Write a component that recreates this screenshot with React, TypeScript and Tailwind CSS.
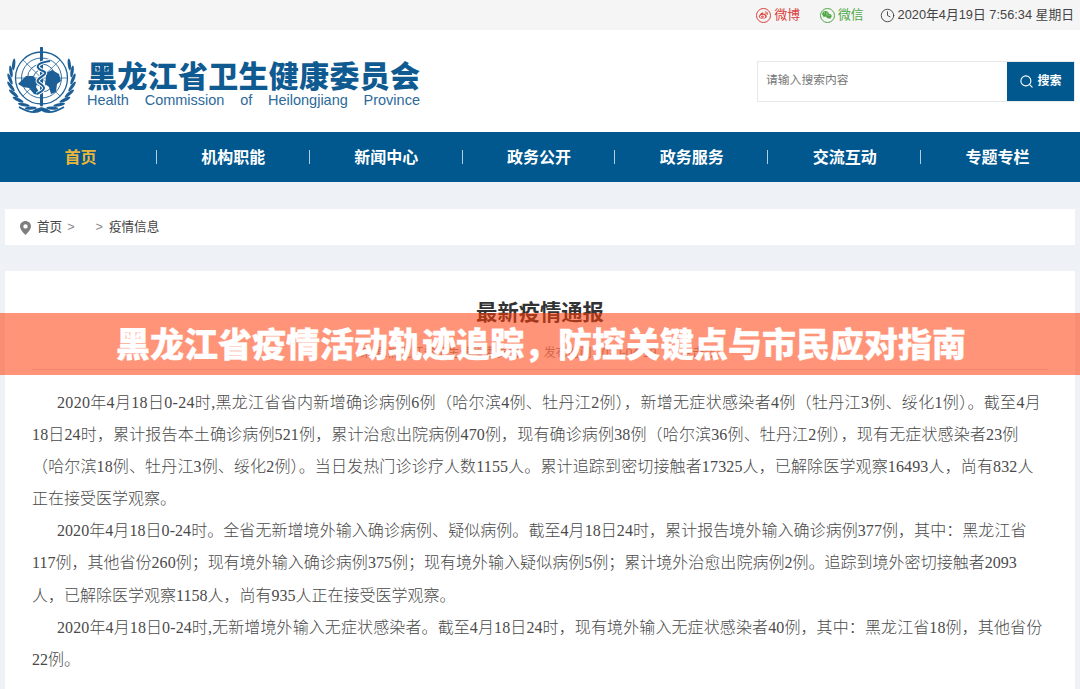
import { Clock, Search } from "lucide-react";
import { FaWeibo, FaWeixin } from "react-icons/fa";

const navItems = ["首页", "机构职能", "新闻中心", "政务公开", "政务服务", "交流互动", "专题专栏"];

const lines = [
  { text: "2020年4月18日0-24时,黑龙江省省内新增确诊病例6例\uFF08哈尔滨4例、牡丹江2例\uFF09\uFF0C新增无症状感染者4例\uFF08牡丹江3例、绥化1例\uFF09。截至4月", cls: "pl-[25px] tracking-[0.32px]" },
  { text: "18日24时\uFF0C累计报告本土确诊病例521例\uFF0C累计治愈出院病例470例\uFF0C现有确诊病例38例\uFF08哈尔滨36例、牡丹江2例\uFF09\uFF0C现有无症状感染者23例", cls: "tracking-[0.15px]" },
  { text: "\uFF08哈尔滨18例、牡丹江3例、绥化2例\uFF09。当日发热门诊诊疗人数1155人。累计追踪到密切接触者17325人\uFF0C已解除医学观察16493人\uFF0C尚有832人", cls: "tracking-[0.14px]" },
  { text: "正在接受医学观察。", cls: "" },
  { text: "2020年4月18日0-24时。全省无新增境外输入确诊病例、疑似病例。截至4月18日24时\uFF0C累计报告境外输入确诊病例377例\uFF0C其中\uFF1A黑龙江省", cls: "pl-[25px] tracking-[0.06px]" },
  { text: "117例\uFF0C其他省份260例\uFF1B现有境外输入确诊病例375例\uFF1B现有境外输入疑似病例5例\uFF1B累计境外治愈出院病例2例。追踪到境外密切接触者2093", cls: "tracking-[0.02px]" },
  { text: "人\uFF0C已解除医学观察1158人\uFF0C尚有935人正在接受医学观察。", cls: "" },
  { text: "2020年4月18日0-24时,无新增境外输入无症状感染者。截至4月18日24时\uFF0C现有境外输入无症状感染者40例\uFF0C其中\uFF1A黑龙江省18例\uFF0C其他省份", cls: "pl-[25px] tracking-[0.11px]" },
  { text: "22例。", cls: "" },
];

function WhoLogo() {
  const leaves = [0, 1, 2, 3, 4, 5, 6, 7, 8];
  return (
    <svg width="72" height="68" viewBox="0 0 72 68" className="shrink-0">
      <g fill="none" stroke="#1c5f96">
        <circle cx="36.5" cy="31" r="26" strokeWidth="1.3" />
        <circle cx="36.5" cy="31" r="20" strokeWidth="0.9" />
        <circle cx="36.5" cy="31" r="14" strokeWidth="0.9" />
        <circle cx="36.5" cy="31" r="8" strokeWidth="0.9" />
        <path d="M10.5 31H62.5M18 13L55 49M55 13L18 49" strokeWidth="0.7" />
      </g>
      <path d="M13 37l8-8 7 0 5 5-2 6 3 5 0 3-5-1-5-6-6-1z M41 26l6-3 7 4 2 7-4 3-1 8-5 2-2-7-4-3 1-7z" fill="#1c5f96" />
      <path d="M36.5 1V58" stroke="#1c5f96" strokeWidth="3" strokeLinecap="round" />
      <path d="M45 14C30 16 30 21 38 24C46 27 30 31 33 35C38 39 44 41 32 47" fill="none" stroke="#fff" strokeWidth="4" />
      <path d="M45 14C30 16 30 21 38 24C46 27 30 31 33 35C38 39 44 41 32 47" fill="none" stroke="#1c5f96" strokeWidth="2" />
      {leaves.map((i) => {
        const deg = i * 14 - 28;
        const a = deg * (Math.PI / 180);
        const x = 36.5 + 31.5 * Math.cos(a);
        const y = 32 + 31 * Math.sin(a);
        const r = deg + 22;
        return (
          <g key={i}>
            <ellipse cx={x} cy={y} rx="1.6" ry="6" fill="#1c5f96" transform={`rotate(${r} ${x} ${y})`} />
            <ellipse cx={73 - x} cy={y} rx="1.6" ry="6" fill="#1c5f96" transform={`rotate(${-r} ${73 - x} ${y})`} />
          </g>
        );
      })}
      <path d="M14 60C24 66 32 66 36.5 63C41 66 49 66 59 60" fill="none" stroke="#1c5f96" strokeWidth="1.6" />
    </svg>
  );
}

export default function App() {
  return (
    <div className="relative h-[689px] overflow-hidden bg-[#eef2f6] font-['Liberation_Sans','Noto_Sans_CJK_SC',sans-serif]">
      <div className="flex h-[30px] items-center justify-end bg-[#f5f5f5] pr-[6px] text-[12.8px]">
        <span className="flex items-center gap-[3px] text-[#d9403a]">
          <span className="flex h-[15px] w-[15px] items-center justify-center rounded-full border border-[#d9403a]">
            <FaWeibo className="h-[9px] w-[9px]" />
          </span>
          微博
        </span>
        <span className="ml-[20px] flex items-center gap-[3px] text-[#4ea744]">
          <span className="flex h-[15px] w-[15px] items-center justify-center rounded-full border border-[#4ea744]">
            <FaWeixin className="h-[10px] w-[10px]" />
          </span>
          微信
        </span>
        <span className="ml-[16px] flex items-center gap-[3px] text-[#444]">
          <Clock className="h-[15px] w-[15px]" strokeWidth={1.5} />
          2020年4月19日 7:56:34 星期日
        </span>
      </div>

      <header className="flex h-[102px] items-center justify-between bg-white pl-[5px] pr-[5px]">
        <div className="flex items-center gap-[10px]">
          <WhoLogo />
          <div className="w-[333px] pb-[2px] pt-[3px]">
            <div className="whitespace-nowrap text-[30px] font-black leading-[46px] tracking-[0.3px] text-[#0f5b91]">黑龙江省卫生健康委员会</div>
            <div className="mt-[-8px] flex justify-between text-[14.5px] leading-[17px] text-[#2b6a9b]">
              <span>Health</span>
              <span>Commission</span>
              <span>of</span>
              <span>Heilongjiang</span>
              <span>Province</span>
            </div>
          </div>
        </div>
        <div className="flex h-[41px] w-[318px] border border-[#e8e8e8] bg-white">
          <div className="flex flex-1 items-center pl-[8px] text-[11.8px] text-[#777]">请输入搜索内容</div>
          <div className="flex w-[67px] items-center justify-center gap-[3px] bg-[#00588f] text-[12px] font-bold text-white">
            <Search className="h-[15px] w-[15px]" strokeWidth={1.75} />
            搜索
          </div>
        </div>
      </header>

      <nav className="grid h-[50px] grid-cols-7 bg-[#00588f] px-[5px]">
        {navItems.map((item, i) => (
          <div key={item} className="relative flex items-center justify-center pr-[2px] pt-[2px]">
            <span className={i === 0 ? "text-[16px] font-bold text-[#e9b63c]" : "text-[16px] font-bold text-white"}>{item}</span>
            {i < 6 && <span className="absolute right-[1px] top-[18px] h-[14px] w-px bg-white/70" />}
          </div>
        ))}
      </nav>

      <div className="mx-[5px] mt-[27px] flex h-[36px] items-center bg-white pl-[15px] pt-[1px] text-[12.6px] text-[#444]">
        <svg width="11" height="14" viewBox="0 0 11 14" className="shrink-0">
          <path fillRule="evenodd" d="M5.5 0C2.5 0 0 2.4 0 5.3 0 9 5.5 14 5.5 14S11 9 11 5.3C11 2.4 8.5 0 5.5 0ZM5.5 3.2A2.2 2.2 0 1 1 5.5 7.6 2.2 2.2 0 0 1 5.5 3.2Z" fill="#7d7d7d" />
        </svg>
        <span className="ml-[6px]">首页</span>
        <span className="ml-[5px] text-[#888]">&gt;</span>
        <span className="ml-[21px] text-[#888]">&gt;</span>
        <span className="ml-[6px]">疫情信息</span>
      </div>

      <main className="mx-[5px] mt-[26px] h-[500px] bg-white px-[27px] pt-[28px]">
        <h1 className="text-center text-[21.3px] font-bold leading-[28px] text-[#333]">最新疫情通报</h1>
        <div className="mt-[18px] flex justify-center gap-[24px] border-b border-[#ddd] pb-[8px] text-[12px] leading-[16px] text-[#999]">
          <span>来源:黑龙江省卫生健康委员会</span>
          <span>发布时间:2020-04-19</span>
          <span>点击数:</span>
        </div>
        <div className="mt-[17px] font-['Liberation_Serif','Noto_Sans_CJK_SC',serif] text-[16px] font-light leading-[32.1px] text-[#4a4a4a]">
          {lines.map((line) => (
            <p key={line.text} className={`whitespace-nowrap ${line.cls}`}>
              {line.text}
            </p>
          ))}
        </div>
      </main>

      <div className="absolute inset-x-0 top-[313px] flex h-[62px] items-center justify-center bg-[#ff3c0a]/55 pl-[2px] pt-[2px]">
        <span className="whitespace-nowrap text-[34px] font-black text-white [-webkit-text-stroke:0.3px_#fff]">{"黑龙江省疫情活动轨迹追踪\uFF0C防控关键点与市民应对指南"}</span>
      </div>
    </div>
  );
}
